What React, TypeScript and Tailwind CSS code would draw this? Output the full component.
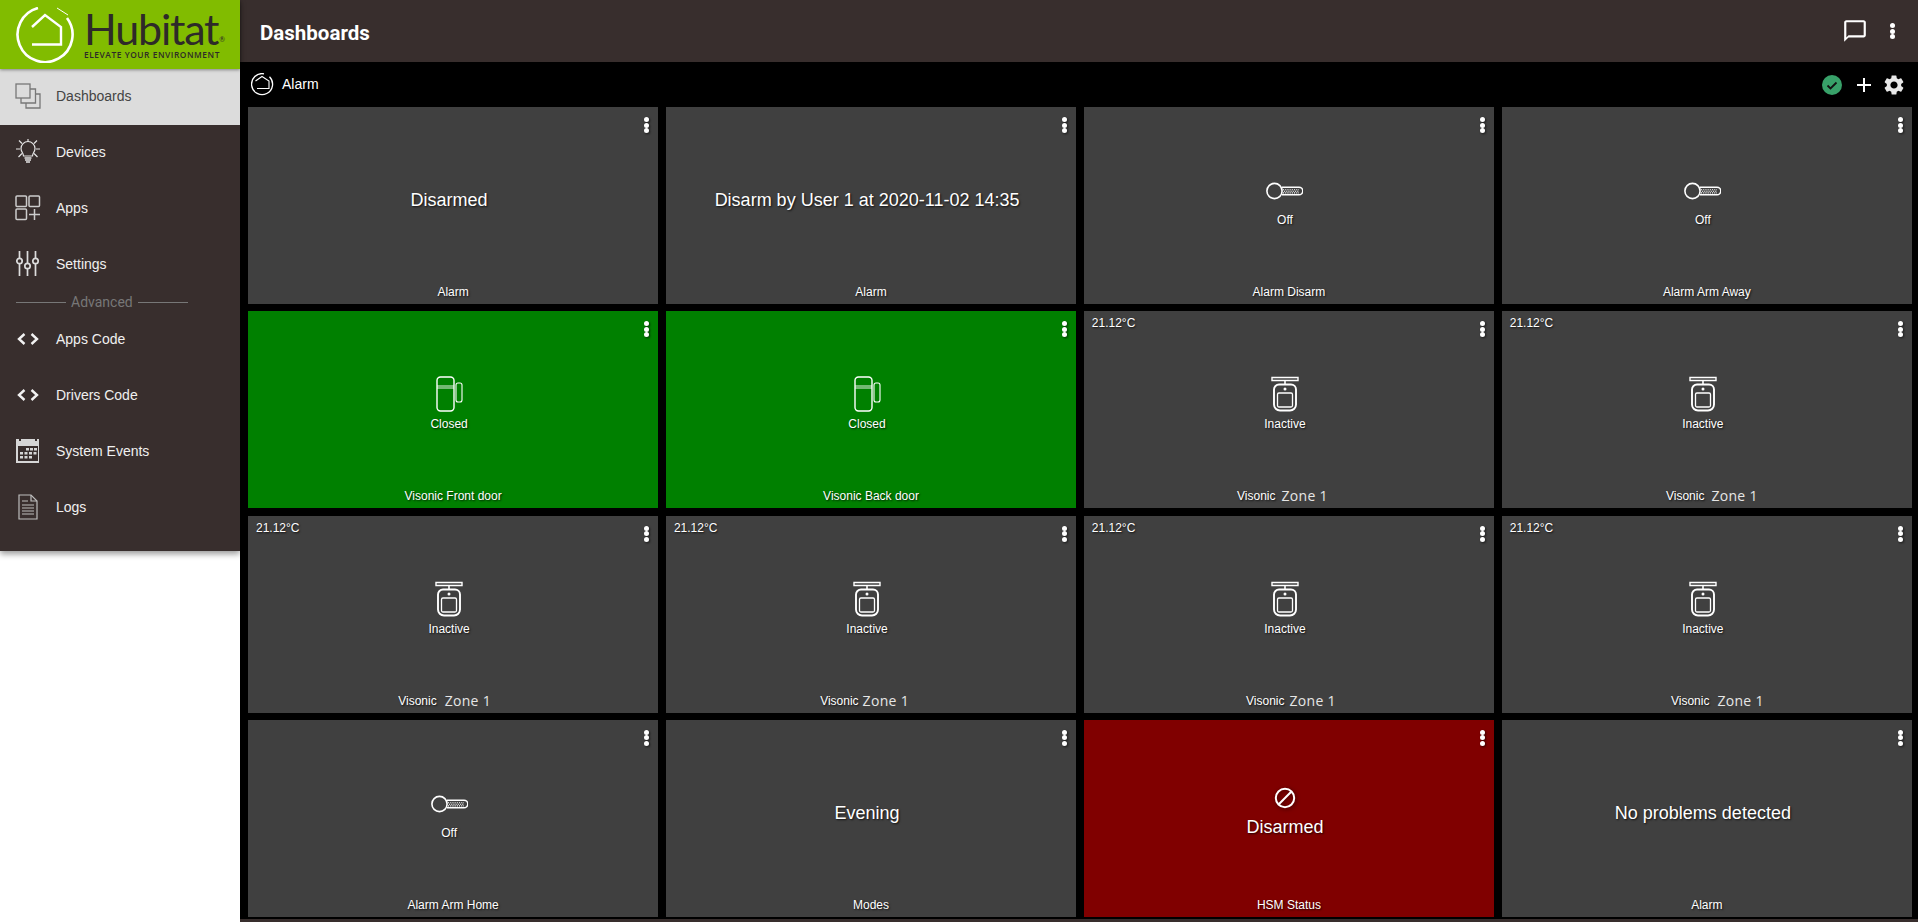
import { MdAdd, MdSettings } from 'react-icons/md';

type TileProps = {
  value?: string;
  title: string;
  icon?: 'key' | 'contact' | 'motion' | 'ban';
  bg?: string;
  temp?: string;
  zoneGap?: string;
  zoneShift?: string;
};

const shadow = '[text-shadow:1px_1px_2px_rgba(0,0,0,0.75)]';

function KeyIcon() {
  return (
    <svg width="37" height="18" viewBox="0 0 37 18" fill="none" className="mb-[13px] mt-[10px]">
      <path d="M16 5.2h17a3.800 3.800 0 0 1 0 7.600H16" stroke="white" strokeWidth="1.500" />
      <circle cx="8.500" cy="9" r="7.600" stroke="white" strokeWidth="1.600" />
      <path d="M17 7.700h16M18 9.300h15M17 10.900h16" stroke="white" strokeWidth="1.100" strokeDasharray="1.100 1.100" />
    </svg>
  );
}

function ContactIcon() {
  return (
    <svg width="27" height="36" viewBox="0 0 27 36" fill="none" stroke="white" className="mb-[5px]">
      <rect x="1" y="1" width="17" height="34" rx="3.500" strokeWidth="1.400" />
      <path d="M1 10h17M1 12h17" strokeWidth="0.900" />
      <rect x="20" y="7" width="6" height="19" rx="2" strokeWidth="1.100" />
    </svg>
  );
}

function MotionIcon() {
  return (
    <svg width="28" height="36" viewBox="0 0 28 36" fill="none" stroke="white" className="mb-[5px]">
      <path d="M1 1.500h26v3H1z" strokeWidth="1.400" />
      <path d="M14 4.500v4" strokeWidth="1.600" />
      <path d="M8 8.500h12a5 5 0 0 1 5 5v15a6 6 0 0 1-6 6H9a6 6 0 0 1-6-6v-15a5 5 0 0 1 5-5z" strokeWidth="1.900" />
      <circle cx="14" cy="13" r="1.500" fill="white" stroke="none" />
      <rect x="6.500" y="17" width="15" height="14" rx="1.500" strokeWidth="1.300" />
    </svg>
  );
}

function BanIcon() {
  return (
    <svg width="22" height="22" viewBox="0 0 22 22" fill="none" stroke="white" strokeWidth="2" className="mb-[7px] drop-shadow-[1px_1px_2px_rgba(0,0,0,0.6)]">
      <circle cx="11" cy="11" r="9.200" />
      <path d="M4.800 17.200 17.200 4.800" />
    </svg>
  );
}

function Dots({ className = '' }: { className?: string }) {
  return (
    <div className={`flex flex-col gap-[0.5px] ${className}`}>
      <span className="h-[5px] w-[5px] rounded-full bg-white" />
      <span className="h-[5px] w-[5px] rounded-full bg-white" />
      <span className="h-[5px] w-[5px] rounded-full bg-white" />
    </div>
  );
}

function Tile({ value, title, icon, bg = 'bg-[#404040]', temp, zoneGap, zoneShift = '' }: TileProps) {
  return (
    <div className={`relative flex flex-col items-center font-['Liberation_Sans',sans-serif] text-white ${bg} ${shadow}`}>
      {temp && <span className="absolute left-[8px] top-[5px] text-[12px] leading-[14px]">{temp}</span>}
      <Dots className="absolute right-[9px] top-[10px] drop-shadow-[1px_1px_1px_rgba(0,0,0,0.6)]" />
      <div className={`flex flex-1 flex-col items-center justify-center pr-[8px] ${icon ? 'pt-[12px]' : 'pt-[13px]'}`}>
        {icon === 'key' && <KeyIcon />}
        {icon === 'contact' && <ContactIcon />}
        {icon === 'motion' && <MotionIcon />}
        {icon === 'ban' && <BanIcon />}
        {icon && icon !== 'ban' ? (
          <span className="text-[12px] leading-[14px]">{value}</span>
        ) : (
          <span className="text-[18px] leading-[22px]">{value}</span>
        )}
      </div>
      <div className={`flex h-[24px] items-center justify-center text-[12px] leading-[14px] ${zoneShift}`}>
        <span>{title}</span>
        {zoneGap && (
          <span className={`${zoneGap} font-['Open_Sans',sans-serif] text-[14px] tracking-[0.3px] text-[#e6e6e6] [text-shadow:none]`}>
            Zone 1
          </span>
        )}
      </div>
    </div>
  );
}

function NavIcon({ name }: { name: string }) {
  const c = name === 'Dashboards' ? '#777' : '#ccc';
  if (name === 'Dashboards')
    return (
      <svg width="26" height="26" viewBox="0 0 26 26" fill="none" stroke={c} strokeWidth="1.300">
        <rect x="1" y="1" width="14" height="14" />
        <path d="M15 6h5.500v14H6V15" />
        <path d="M20.500 11H25v14H11v-5" />
      </svg>
    );
  if (name === 'Devices')
    return (
      <svg width="26" height="26" viewBox="0 0 26 26" fill="none" stroke="#e4e4e4" strokeWidth="1.200">
        <path d="M8.500 17c0-3-2.500-4-2.500-7.500a7 7 0 0 1 14 0C20 13 17.500 14 17.500 17z" />
        <path d="M9.500 19h7M10 21h6M11 23h4" strokeWidth="1.400" />
        <path d="M13 0v3M1 10h4M21 10h4M4 1.500l3 3M22 1.500l-3 3M3.500 18l3.500-3.500M22.500 18L19 14.500" />
      </svg>
    );
  if (name === 'Apps')
    return (
      <svg width="26" height="26" viewBox="0 0 26 26" fill="none" stroke={c} strokeWidth="1.500">
        <rect x="1" y="1" width="10.500" height="10.500" rx="1" />
        <rect x="14" y="1" width="10.500" height="10.500" rx="1" />
        <rect x="1" y="14" width="10.500" height="10.500" rx="1" />
        <path d="M19.500 14v11M14 19.500h11" />
      </svg>
    );
  if (name === 'Settings')
    return (
      <svg width="26" height="26" viewBox="0 0 26 26" fill="none" stroke="#ddd" strokeWidth="1.700">
        <path d="M4.500 0v7.500M4.500 13v12M12.500 0v12M12.500 18v7M20.500 0v7.500M20.500 13v12" />
        <circle cx="4.500" cy="10" r="2.700" />
        <circle cx="12.500" cy="15" r="2.700" />
        <circle cx="20.500" cy="10" r="2.700" />
      </svg>
    );
  if (name === 'Apps Code' || name === 'Drivers Code')
    return (
      <svg width="26" height="26" viewBox="0 0 26 26" fill="none" stroke="#f2f2f2" strokeWidth="2.400">
        <path d="M9.500 8 4 13l5.500 5M16.500 8l5.500 5-5.500 5" />
      </svg>
    );
  if (name === 'System Events')
    return (
      <svg width="26" height="26" viewBox="0 0 26 26" className="fill-[#d6d6d6]">
        <path d="M1 1h3v2h2V1h14v2h2V1h2v24H1z" />
        <path d="M3 8h20v15H3z" fill="#382e2d" />
        <path d="M11 10h3v2.500h-3zM15 10h3v2.500h-3zM19 10h3v2.500h-3zM5 14h3v2.500H5zM9.500 14h3v2.500h-3zM14 14h3v2.500h-3zM18.500 14h3v2.500h-3zM5 18h3v2.500H5zM9.500 18h3v2.500h-3zM14 18h3v2.500h-3z" />
      </svg>
    );
  return (
    <svg width="26" height="26" viewBox="0 0 26 26" fill="none" stroke="#bdbdbd" strokeWidth="1.200">
      <path d="M4 1h12l6 6v18H4z" />
      <path d="M16 1v6h6M7 7h6M7 11h12M7 14h12M7 17h12M7 20h12" />
    </svg>
  );
}

function NavItem({ label, active }: { label: string; active?: boolean }) {
  return (
    <div className={`flex h-[56px] items-center pb-[2px] pl-[15px] font-['Liberation_Sans',sans-serif] text-[14px] ${active ? 'bg-[#dcdcdc] text-[#444]' : 'text-[#f0f0f0]'}`}>
      <div className="flex w-[26px] justify-center">
        <NavIcon name={label} />
      </div>
      <span className="ml-[15px]">{label}</span>
    </div>
  );
}

function Logo() {
  return (
    <div className="relative z-10 flex h-[69px] items-center bg-[#81bc00] pl-[16px] shadow-[0_1px_3px_rgba(0,0,0,0.4)]">
      <svg width="60" height="56" viewBox="0 0 60 56" fill="none" stroke="white">
        <path d="M22 1 A27.500 27.500 0 1 0 51 11" strokeWidth="2.600" />
        <path d="M41 1 L52 8" strokeWidth="1" />
        <path d="M16 20 29 8 45 20v17.500H16" strokeWidth="2.400" />
      </svg>
      <div className="ml-[8px] flex flex-col text-[#2e2a29]">
        <span className="font-['Lato',sans-serif] text-[43px] leading-[38px] tracking-[-1.2px]">
          Hubitat
          <sup className="ml-[1px] text-[7px]">®</sup>
        </span>
        <span className="mt-[3px] whitespace-nowrap font-['Open_Sans',sans-serif] text-[8.400px] font-semibold leading-[8px] tracking-[0.55px]">
          ELEVATE YOUR ENVIRONMENT
        </span>
      </div>
    </div>
  );
}

function Sidebar() {
  return (
    <aside className="relative z-20 h-[551px] w-[240px] shrink-0 bg-[#382e2d] shadow-[0_3px_6px_rgba(0,0,0,0.4)]">
      <Logo />
      <NavItem label="Dashboards" active />
      <NavItem label="Devices" />
      <NavItem label="Apps" />
      <NavItem label="Settings" />
      <div className="flex h-[19px] items-center pl-[16px] font-['Roboto',sans-serif] text-[14px] text-[#777]">
        <span className="h-px w-[50px] bg-[#777]" />
        <span className="mx-[5px]">Advanced</span>
        <span className="h-px w-[50px] bg-[#777]" />
      </div>
      <NavItem label="Apps Code" />
      <NavItem label="Drivers Code" />
      <NavItem label="System Events" />
      <NavItem label="Logs" />
    </aside>
  );
}

export default function App() {
  return (
    <div className="flex h-[922px] w-[1918px] overflow-hidden bg-white font-['Roboto',sans-serif]">
      <Sidebar />
      <main className="flex min-w-0 flex-1 flex-col">
        <header className="flex h-[62px] items-center justify-between bg-[#382e2d] pl-[20px] pr-[23px] text-white">
          <h1 className="mt-[4px] text-[20.500px] font-bold">Dashboards</h1>
          <div className="flex items-center gap-[22px]">
            <svg width="26" height="26" viewBox="0 0 24 24" fill="white">
              <path d="M20 2H4c-1.100 0-2 .9-2 2v18l4-4h14c1.100 0 2-.9 2-2V4c0-1.100-.9-2-2-2zm0 14H6l-2 2V4h16v12z" />
            </svg>
            <Dots />
          </div>
        </header>
        <div className="flex h-[45px] items-center justify-between bg-black pl-[11px] pr-[12px] text-white">
          <div className="flex items-center gap-[8px]">
            <svg width="23" height="23" viewBox="0 0 23 23" fill="none" stroke="white">
              <path d="M13 .8A10.500 10.500 0 1 0 18.500 3.700" strokeWidth="1.300" />
              <path d="M4.500 8 11 3.500l7 4.500v7.500H6" strokeWidth="1.100" />
            </svg>
            <span className="font-['Liberation_Sans',sans-serif] text-[14px]">Alarm</span>
          </div>
          <div className="flex items-center">
            <svg width="20" height="20" viewBox="0 0 20 20" className="mr-[9.500px]">
              <circle cx="10" cy="10" r="10" fill="#38a169" />
              <path d="M5.500 10.500l3 3L14.500 7.500" fill="none" stroke="#111" strokeWidth="1.800" />
            </svg>
            <MdAdd size={24} className="mr-[6.500px]" />
            <MdSettings size={24} className="text-[#e8e8e8]" />
          </div>
        </div>
        <div className="grid flex-1 grid-cols-4 grid-rows-[repeat(4,197px)] gap-x-[7.670px] gap-y-[7.330px] bg-black pl-[8px] pr-[6px]">
          <Tile value="Disarmed" title="Alarm" />
          <Tile value="Disarm by User 1 at 2020-11-02 14:35" title="Alarm" />
          <Tile value="Off" title="Alarm Disarm" icon="key" />
          <Tile value="Off" title="Alarm Arm Away" icon="key" />
          <Tile value="Closed" title="Visonic Front door" icon="contact" bg="bg-[#008000]" />
          <Tile value="Closed" title="Visonic Back door" icon="contact" bg="bg-[#008000]" />
          <Tile value="Inactive" title="Visonic" zoneGap="ml-[6px]" zoneShift="mr-[13px]" icon="motion" temp="21.12°C" />
          <Tile value="Inactive" title="Visonic" zoneGap="ml-[7px]" zoneShift="ml-[10px]" icon="motion" temp="21.12°C" />
          <Tile value="Inactive" title="Visonic" zoneGap="ml-[8px]" zoneShift="mr-[17px]" icon="motion" temp="21.12°C" />
          <Tile value="Inactive" title="Visonic" zoneGap="ml-[4px]" zoneShift="mr-[13px]" icon="motion" temp="21.12°C" />
          <Tile value="Inactive" title="Visonic" zoneGap="ml-[5px]" zoneShift="ml-[4px]" icon="motion" temp="21.12°C" />
          <Tile value="Inactive" title="Visonic" zoneGap="ml-[8px]" zoneShift="ml-[21px]" icon="motion" temp="21.12°C" />
          <Tile value="Off" title="Alarm Arm Home" icon="key" />
          <Tile value="Evening" title="Modes" />
          <Tile value="Disarmed" title="HSM Status" icon="ban" bg="bg-[#800000]" />
          <Tile value="No problems detected" title="Alarm" />
        </div>
        <div className="h-[3px] shrink-0 bg-[#382e2d]" />
      </main>
    </div>
  );
}
